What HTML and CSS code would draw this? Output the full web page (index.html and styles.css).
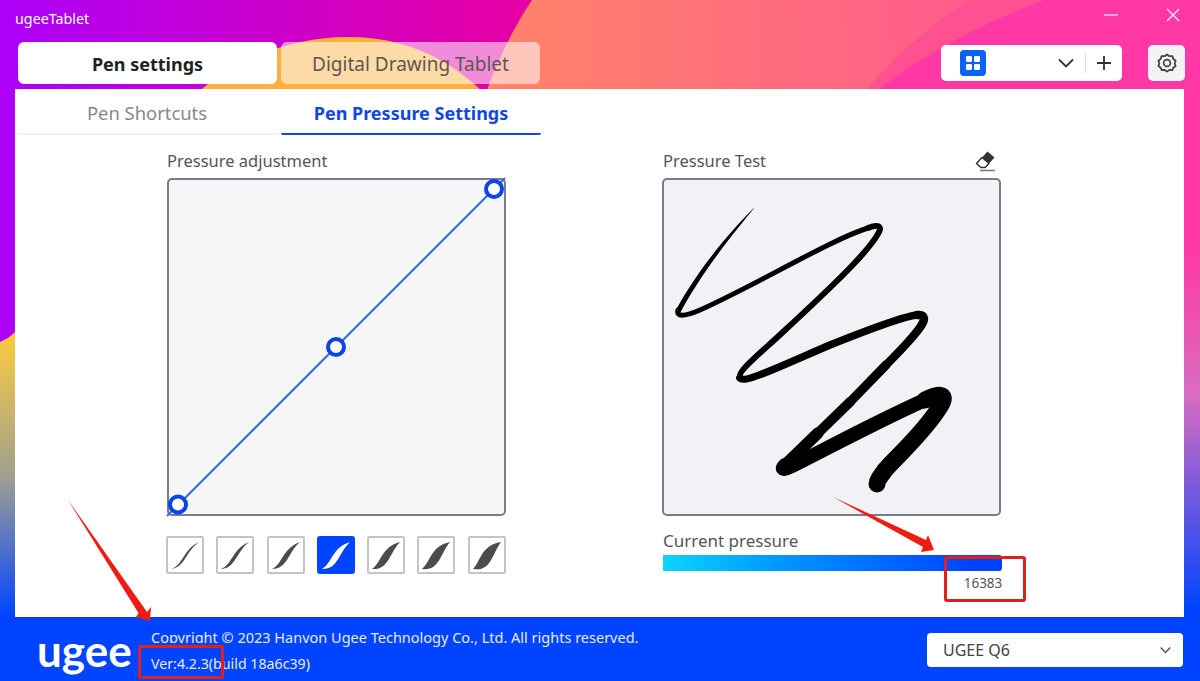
FILE: index.html
```html
<!DOCTYPE html>
<html lang="en">
<head>
<meta charset="utf-8">
<title>ugeeTablet</title>
<link rel="stylesheet" href="styles.css">
</head>
<body>
<div class="app">
  <svg class="backdrop" viewBox="0 0 1200 681" aria-hidden="true">
    <defs>
      <linearGradient id="bgLeft" gradientUnits="userSpaceOnUse" x1="0" y1="335" x2="0" y2="617">
        <stop offset="0" stop-color="#fbcb3c"/><stop offset="0.5" stop-color="#a0a090"/><stop offset="1" stop-color="#0044ff"/>
      </linearGradient>
      <linearGradient id="bgRight" gradientUnits="userSpaceOnUse" x1="0" y1="250" x2="0" y2="610">
        <stop offset="0" stop-color="#ff38a5"/><stop offset="0.4" stop-color="#d86cc0"/><stop offset="1" stop-color="#0044ff"/>
      </linearGradient>
      <linearGradient id="bgPurple" gradientUnits="userSpaceOnUse" x1="0" y1="0" x2="540" y2="0">
        <stop offset="0" stop-color="#ac00f8"/><stop offset="1" stop-color="#e800a0"/>
      </linearGradient>
      <linearGradient id="bgCoral" gradientUnits="userSpaceOnUse" x1="490" y1="60" x2="970" y2="30">
        <stop offset="0" stop-color="#ff8468"/><stop offset="1" stop-color="#ff5c8c"/>
      </linearGradient>
    </defs>
    <rect x="0" y="0" width="600" height="681" fill="url(#bgLeft)"/>
    <rect x="600" y="0" width="600" height="681" fill="url(#bgRight)"/>
    <path d="M0 0H600V120H15V332C10 337 5 340 0 342Z" fill="url(#bgPurple)"/>
    <path d="M180 110C225 60 290 37 348 37C405 37 455 58 500 110Z" fill="#ffb03c"/>
    <path d="M532 0H973C930 25 895 55 868 89V110H480C495 65 512 30 532 0Z" fill="url(#bgCoral)"/>
    <path d="M973 0H1044C990 20 930 50 879 89V110H868V89C895 55 930 25 973 0Z" fill="#ff5092"/>
  </svg>

  <header class="titlebar">
    <span class="app-name">ugeeTablet</span>
    <div class="window-controls">
      <svg class="win-icon" viewBox="0 0 16 16"><path d="M1 8H15" stroke="#ffd9ea" stroke-width="1.4"/></svg>
      <svg class="win-icon" viewBox="0 0 16 16"><path d="M2 2L14 14M14 2L2 14" stroke="#ffe6f2" stroke-width="1.4"/></svg>
    </div>
  </header>

  <nav class="toolbar">
    <button class="main-tab is-active">Pen settings</button>
    <button class="main-tab">Digital Drawing Tablet</button>
    <div class="toolbar-right">
      <div class="app-switch">
        <span class="grid-icon">
          <svg viewBox="0 0 26 26"><rect x="6" y="6" width="6" height="6" rx="1.2" fill="#fff"/><rect x="14" y="6" width="6" height="6" rx="1.2" fill="#fff"/><rect x="6" y="14" width="6" height="6" rx="1.2" fill="#fff"/><rect x="14" y="14" width="6" height="6" rx="1.2" fill="#fff"/></svg>
        </span>
        <svg class="chevron" viewBox="0 0 16 10"><path d="M1 1.5L8 8.5L15 1.5" fill="none" stroke="#333" stroke-width="1.8"/></svg>
        <span class="switch-sep"></span>
        <svg class="plus" viewBox="0 0 16 16"><path d="M8 1V15M1 8H15" stroke="#333" stroke-width="1.8"/></svg>
      </div>
      <button class="gear-btn" aria-label="Settings">
        <svg viewBox="0 0 20 20"><path d="M10 1.5L12.4 3.2L15.4 3.1L16.3 5.9L18.6 7.7L17.7 10.5L18.6 13L16.3 14.7L15.4 17L12.4 17L10 18.6L7.6 17L4.6 17L3.7 14.7L1.4 13L2.3 10.5L1.4 7.7L3.7 5.9L4.6 3.1L7.6 3.2Z" fill="none" stroke="#444" stroke-width="1.8" stroke-linejoin="round"/><circle cx="10" cy="10" r="3.4" fill="none" stroke="#444" stroke-width="1.7"/></svg>
      </button>
    </div>
  </nav>

  <main class="panel">
    <div class="sub-tabs">
      <div class="sub-tab">Pen Shortcuts</div>
      <div class="sub-tab is-active">Pen Pressure Settings</div>
    </div>
    <div class="columns">
      <section class="col">
        <div class="col-label">Pressure adjustment</div>
        <div class="plot plot-curve">
          <svg viewBox="169 180 335 334">
            <path d="M167 516L505 178" stroke="#2f66ea" stroke-width="2"/>
            <circle class="handle" cx="494" cy="189" r="8"/>
            <circle class="handle" cx="336" cy="347" r="8"/>
            <circle class="handle" cx="178" cy="504.500" r="8"/>
          </svg>
        </div>
        <div class="presets">
          <div class="preset"><svg viewBox="2 2 34 34"><path d="M5 33C16.800 29.800 16.800 13.800 33 6C19.200 15.700 19.200 31.700 5 33Z"/></svg></div>
          <div class="preset"><svg viewBox="2 2 34 34"><path d="M5 33C16.200 29 16.200 13 33 6C19.800 16.300 19.800 32.300 5 33Z"/></svg></div>
          <div class="preset"><svg viewBox="2 2 34 34"><path d="M5 33C15.500 28.300 15.500 12.300 33 6C20.500 17 20.500 33 5 33Z"/></svg></div>
          <div class="preset is-active"><svg viewBox="2 2 34 34"><path d="M5 33C15 27.500 15 11.500 33 6C21 17.500 21 33.500 5 33Z"/></svg></div>
          <div class="preset"><svg viewBox="2 2 34 34"><path d="M5 33C14.300 26.800 14.300 10.800 33 6C21.700 18.200 21.700 34.200 5 33Z"/></svg></div>
          <div class="preset"><svg viewBox="2 2 34 34"><path d="M5 33C13.500 26 13.500 10 33 6C22.500 19 22.500 35 5 33Z"/></svg></div>
          <div class="preset"><svg viewBox="2 2 34 34"><path d="M5 33C12.800 25.300 12.800 9.300 33 6C23.200 19.700 23.200 35.700 5 33Z"/></svg></div>
        </div>
      </section>
      <section class="col">
        <div class="col-label col-label-split">
          <span>Pressure Test</span>
          <svg class="eraser" viewBox="0 0 22 22">
            <path d="M13.500 1.500L20.500 7.500L15 13.500L8 7.500Z" fill="#333"/>
            <path d="M8 7.500L15 13.500L11 17.500H7L2.500 13.500Z" fill="#fff" stroke="#333" stroke-width="1.5" stroke-linejoin="round"/>
            <path d="M6 20.500H21" stroke="#777" stroke-width="1.5"/>
          </svg>
        </div>
        <div class="plot plot-test">
          <svg viewBox="664 180 335 334" fill="none" stroke="#000" stroke-linecap="round" stroke-linejoin="round">
            <path d="M755 207C735 226 700 266 676.500 309L680 313C703 270 737 229 755 207Z" fill="#000" stroke="none"/>
            <path d="M678 310C676 317 684 317 700 310C760 283 830 240 868 228" stroke-width="5"/>
            <path d="M868 228C878 224 882 226 879 232C870 250 837 282 783 332C763 351 736 372 740 378" stroke-width="6"/>
            <path d="M740 378C745 384 790 362 830 345C870 329 905 316 917 315" stroke-width="7.500"/>
            <path d="M917 315C926 314 925 320 921 326C913 338 900 351 886 365" stroke-width="8.500"/>
            <path d="M886 365L850 402" stroke-width="9"/>
            <path d="M850 402L818 433" stroke-width="10"/>
            <path d="M818 433L785 465" stroke-width="11.500"/>
            <path d="M785 465C780 470 784 470 792 466C820 452 880 420 925 400" stroke-width="14"/>
            <path d="M925 400C938 394 948 392 941 405C925 432 895 458 885 470C880 477 877 481 877 484" stroke-width="17"/>
          </svg>
        </div>
        <div class="pressure-label">Current pressure</div>
        <div class="pressure-bar"></div>
        <div class="pressure-value">16383</div>
      </section>
    </div>
  </main>

  <footer class="footer">
    <span class="logo">ugee</span>
    <div class="legal">
      <div class="legal-copy">Copyright © 2023 Hanvon Ugee Technology Co., Ltd. All rights reserved.</div>
      <div class="legal-version">Ver:4.2.3(build 18a6c39)</div>
    </div>
    <div class="device-select">
      <span>UGEE Q6</span>
      <svg class="chevron chevron-small" viewBox="0 0 16 10"><path d="M2 2L8 8L14 2" fill="none" stroke="#555" stroke-width="1.8"/></svg>
    </div>
  </footer>

  <svg class="annotations" viewBox="0 0 1200 681" aria-hidden="true">
    <path d="M68 500L147 612L151 607L150 621L136 617L138.500 613Z" fill="#f01c14"/>
    <path d="M833 497L926 540L928 535L934 550L921 552L923 547Z" fill="#f01c14"/>
  </svg>
  <div class="mark mark-version"></div>
  <div class="mark mark-value"></div>
</div>
</body>
</html>
```
FILE: styles.css
```css
* { box-sizing: border-box; }

html, body {
  margin: 0;
  padding: 0;
}

body {
  font-family: "Noto Sans", "Open Sans", sans-serif;
  color: #444;
}

button {
  font: inherit;
  border: 0;
  padding: 0;
}

.app {
  position: relative;
  width: 1200px;
  height: 681px;
  overflow: hidden;
  display: flex;
  flex-direction: column;
}

.backdrop,
.annotations {
  position: absolute;
  left: 0;
  top: 0;
  width: 1200px;
  height: 681px;
}

.annotations { pointer-events: none; }

.titlebar,
.toolbar,
.panel,
.footer {
  position: relative;
}

.titlebar {
  height: 42px;
  flex: none;
  display: flex;
  align-items: flex-start;
  justify-content: space-between;
  padding: 9px 19px 0 15px;
}

.app-name {
  color: #fff;
  font-size: 14.300px;
  line-height: 20px;
}

.window-controls {
  display: flex;
  gap: 46px;
}

.win-icon {
  width: 16px;
  height: 16px;
  margin-top: -2px;
}

.toolbar {
  height: 47px;
  flex: none;
  display: flex;
  align-items: flex-start;
  gap: 4px;
  padding: 0 15px 0 18px;
}

.main-tab {
  width: 259px;
  height: 42px;
  padding-top: 2px;
  border-radius: 6px;
  font-size: 19px;
  color: #5e5650;
  background: rgba(255, 255, 255, 0.55);
}

.main-tab.is-active {
  background: #fff;
  color: #222;
  font-size: 18px;
  font-weight: 700;
}

.toolbar-right {
  margin-left: auto;
  margin-top: 3px;
  display: flex;
  gap: 26px;
}

.app-switch {
  width: 181px;
  height: 36px;
  background: #fff;
  border-radius: 5px;
  display: flex;
  align-items: center;
  padding-left: 19px;
}

.grid-icon {
  width: 26px;
  height: 26px;
  border-radius: 4px;
  background: #0a63f5;
  display: block;
}

.grid-icon svg {
  display: block;
  width: 26px;
  height: 26px;
}

.chevron {
  width: 16px;
  height: 10px;
  flex: none;
}

.app-switch .chevron { margin-left: 72px; }

.switch-sep {
  width: 1px;
  height: 20px;
  background: #ddd;
  margin-left: 11px;
}

.plus {
  width: 16px;
  height: 16px;
  margin-left: 10px;
}

.gear-btn {
  width: 37px;
  height: 36px;
  border-radius: 5px;
  background: #f3f3f5;
  display: flex;
  align-items: center;
  justify-content: center;
}

.gear-btn svg {
  width: 20px;
  height: 20px;
}

.panel {
  flex: 1;
  margin: 0 16px 0 15px;
  background: #fff;
}

.sub-tabs {
  display: flex;
  gap: 3px;
  padding: 0 3px;
}

.sub-tab {
  width: 260px;
  height: 46px;
  padding: 1px 2px 0 0;
  line-height: 46px;
  text-align: center;
  font-size: 18.400px;
  color: #888;
  border-bottom: 2px solid #edf1fb;
}

.sub-tab.is-active {
  padding-right: 0;
  color: #1146e6;
  font-size: 18px;
  font-weight: 700;
  border-bottom-color: #1146e6;
  border-radius: 0 0 2px 2px;
}

.columns {
  display: flex;
  gap: 157px;
  padding: 15px 0 0 152px;
}

.col { width: 338px; }

.col-label {
  height: 28px;
  line-height: 22px;
  font-size: 16.500px;
  color: #555;
}

.col-label-split {
  display: flex;
  justify-content: space-between;
  align-items: flex-start;
  padding: 0 4px 0 1px;
}

.eraser {
  width: 22px;
  height: 22px;
}

.plot {
  width: 339px;
  height: 338px;
  border: 2px solid #787c84;
  border-radius: 5px;
}

.plot svg {
  display: block;
  width: 335px;
  height: 334px;
  overflow: visible;
}

.plot-curve { background: #f5f6f8; }
.plot-test { background: #f2f2f6; }

.handle {
  fill: #fff;
  stroke: #0a45ec;
  stroke-width: 4;
}

.presets {
  display: flex;
  gap: 12.300px;
  margin: 20px 0 0 -1px;
}

.preset {
  width: 38px;
  height: 38px;
  flex: none;
  border: 2px solid #c4c4c4;
  border-radius: 2px;
  background: #fff;
}

.preset svg {
  display: block;
  width: 34px;
  height: 34px;
  fill: #4c4c4c;
}

.preset.is-active {
  background: #0044ff;
  border-color: #0044ff;
  border-radius: 3px;
}

.preset.is-active svg { fill: #fff; }

.pressure-label {
  margin: 13px 0 0 1px;
  height: 26px;
  line-height: 24px;
  font-size: 17px;
  color: #555;
}

.pressure-bar {
  width: 339px;
  height: 16px;
  margin-left: 1px;
  border-radius: 0 3px 3px 0;
  background: linear-gradient(90deg, #0cd4ff, #0096ff 35%, #0044ff 90%);
}

.pressure-value {
  margin: 3px 0 0 301px;
  width: 40px;
  text-align: center;
  font-size: 13.500px;
  line-height: 18px;
  color: #555;
}

.footer {
  height: 64px;
  flex: none;
  background: #0044ff;
  display: flex;
  align-items: flex-start;
  padding: 0 17px 0 37px;
}

.logo {
  width: 114px;
  flex: none;
  font-family: "Lato", sans-serif;
  font-weight: 700;
  font-size: 44px;
  line-height: 42px;
  margin-top: 12px;
  color: #fff;
}

.legal {
  padding-top: 7px;
  line-height: 26px;
  color: #e4ecff;
}

.legal-copy { font-size: 14.500px; }
.legal-version { font-size: 14.200px; padding-top: 1px; }

.device-select {
  margin: 16px 0 0 auto;
  width: 256px;
  height: 34px;
  border-radius: 4px;
  background: #fff;
  display: flex;
  align-items: center;
  justify-content: space-between;
  padding: 0 11px 0 16px;
  font-size: 16px;
  color: #444;
}

.chevron-small {
  width: 13px;
  height: 8px;
}

.mark {
  position: absolute;
  border: 3px solid #e0201c;
  border-radius: 3px;
}

.mark-version {
  left: 138px;
  top: 645px;
  width: 86px;
  height: 34px;
}

.mark-version::before {
  content: "";
  position: absolute;
  left: -3px;
  right: -3px;
  top: -5px;
  height: 2px;
  background: #0044ff;
}

.mark-value {
  left: 944px;
  top: 556px;
  width: 82px;
  height: 46px;
}
```
